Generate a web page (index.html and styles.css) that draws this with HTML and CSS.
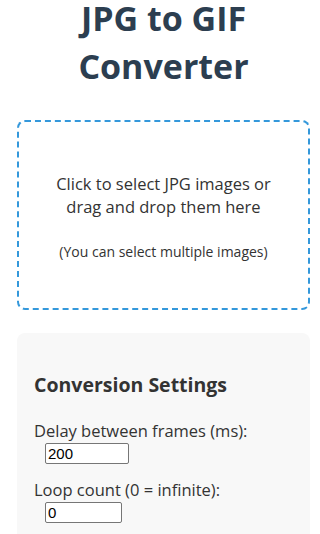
FILE: index.html
```html
<!DOCTYPE html>
<html lang="en">
<head>
<meta charset="utf-8">
<title>JPG to GIF Converter</title>
<link rel="stylesheet" href="styles.css">
</head>
<body>
<div class="container">
  <h1 class="title">JPG to GIF Converter</h1>
  <div class="dropzone">
    <p class="drop-main">Click to select JPG images or drag and drop them here</p>
    <p class="drop-sub">(You can select multiple images)</p>
  </div>
  <div class="settings">
    <h3 class="settings-title">Conversion Settings</h3>
    <div class="field">
      <label class="field-label" for="delay">Delay between frames (ms):</label>
      <input class="field-input delay" id="delay" type="text" value="200">
    </div>
    <div class="field">
      <label class="field-label" for="loop">Loop count (0 = infinite):</label>
      <input class="field-input loop" id="loop" type="text" value="0">
    </div>
  </div>
</div>
</body>
</html>
```

FILE: styles.css
```css
html, body {
  margin: 0;
  padding: 0;
  background: #ffffff;
  overflow: hidden;
}
body {
  font-family: "Open Sans", "Noto Sans", sans-serif;
  color: #333333;
  line-height: 1.5;
}
.container {
  padding: 0 10px 0 17px;
}
.title {
  margin: -6px 0 30px 0;
  font-size: 34px;
  line-height: 48px;
  font-weight: 700;
  color: #2c3e50;
  text-align: center;
}
.dropzone {
  box-sizing: border-box;
  border: 2px dashed #3498db;
  border-radius: 8px;
  height: 190px;
  display: flex;
  flex-direction: column;
  align-items: center;
  justify-content: center;
  text-align: center;
  padding: 4px 24px 0 24px;
}
.drop-main {
  margin: 0;
  font-size: 16.5px;
  line-height: 23px;
}
.drop-sub {
  margin: 24px 0 0 0;
  font-size: 14px;
  line-height: 20px;
}
.settings {
  margin-top: 23px;
  background: #f8f8f8;
  border-radius: 8px;
  padding: 38px 17px 20px 17px;
  height: 200px;
}
.settings-title {
  margin: 0 0 20px 0;
  font-size: 19.5px;
  line-height: 28px;
  font-weight: 700;
}
.field {
  margin-bottom: 14px;
}
.field-label {
  display: block;
  font-size: 16.5px;
  line-height: 24px;
}
.field-input {
  display: block;
  margin: 0 0 0 11px;
  height: 21px;
  box-sizing: border-box;
  border: 1px solid #767676;
  border-radius: 2px;
  padding: 0 2px;
  font-family: "Liberation Sans", Arial, sans-serif;
  font-size: 15px;
  line-height: 19px;
  color: #000;
  background: #fff;
}
.delay { width: 84px; }
.loop { width: 77px; }
```
